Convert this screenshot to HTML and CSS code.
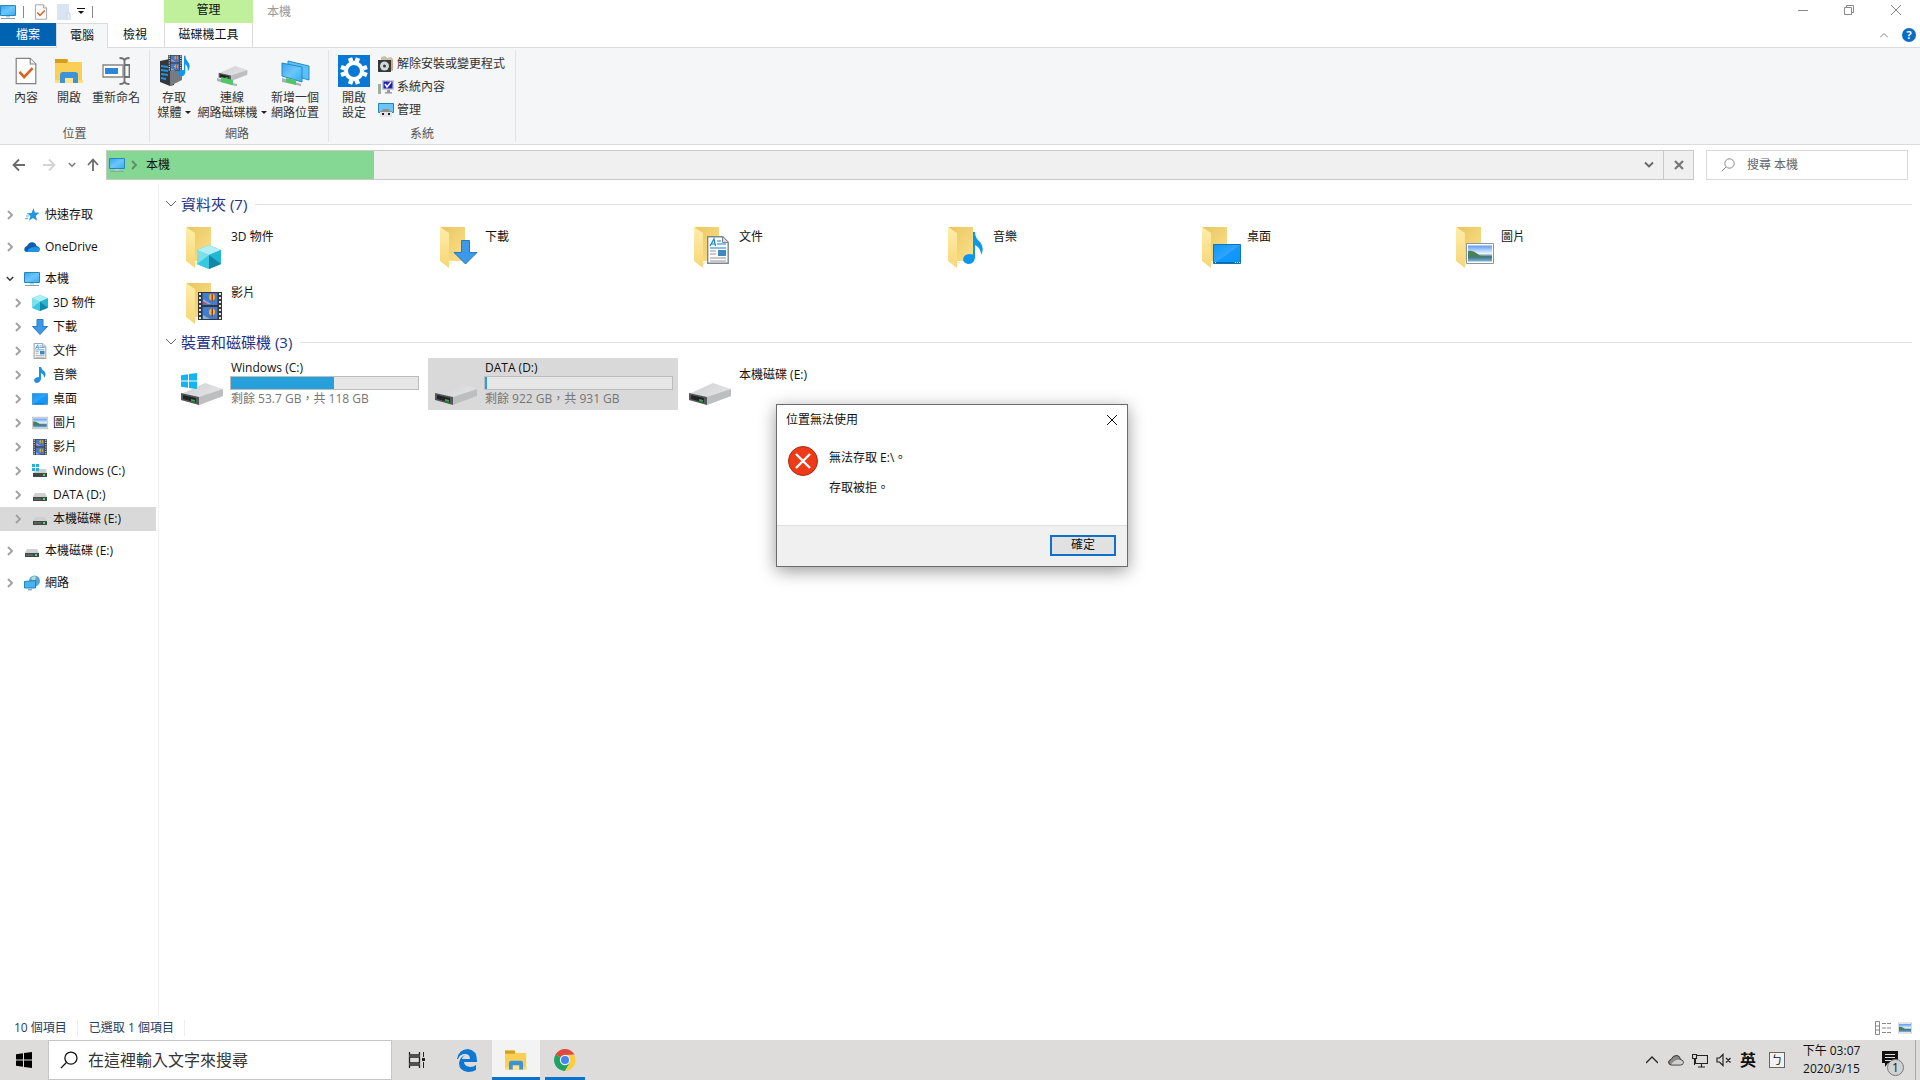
FILE: index.html
```html
<!DOCTYPE html>
<html lang="zh-Hant">
<head>
<meta charset="utf-8">
<title>本機</title>
<link rel="stylesheet" href="styles.css">
</head>
<body>
<svg class="sprite" aria-hidden="true">
  <defs>
    <linearGradient id="g-screen" x1="0" y1="0" x2="1" y2="1"><stop offset="0" stop-color="#3aa5ea"/><stop offset=".5" stop-color="#6cc6fb"/><stop offset="1" stop-color="#36aef3"/></linearGradient>
    <linearGradient id="g-desk" x1="0" y1="0" x2="1" y2="1"><stop offset="0" stop-color="#0d98f6"/><stop offset=".5" stop-color="#2ea5fa"/><stop offset=".52" stop-color="#1499fa"/><stop offset="1" stop-color="#0a93f5"/></linearGradient>
    <linearGradient id="g-fold" x1="0" y1="0" x2="1" y2="1"><stop offset="0" stop-color="#e9c65f"/><stop offset="1" stop-color="#fbe08c"/></linearGradient>
    <linearGradient id="g-flap" x1="0" y1="0" x2="0" y2="1"><stop offset="0" stop-color="#ffedaa"/><stop offset="1" stop-color="#f7d675"/></linearGradient>
    <linearGradient id="g-drive" x1="0" y1="0" x2="1" y2="1"><stop offset="0" stop-color="#cfcfd1"/><stop offset="1" stop-color="#ececee"/></linearGradient>
    <linearGradient id="g-photo" x1="0" y1="0" x2="0" y2="1"><stop offset="0" stop-color="#5b9bf2"/><stop offset=".5" stop-color="#eaf4fc"/><stop offset=".7" stop-color="#3a6f84"/><stop offset="1" stop-color="#7fb3d4"/></linearGradient>
    <symbol id="pc" viewBox="0 0 16 16"><path d="M.5 1.500h15v10H.5z" fill="url(#g-screen)" stroke="#2488bd"/><path d="M6 12h4v1.500H6z" fill="#b9cbd6"/><path d="M1 14.500h14" stroke="#8ba2b0"/></symbol>
    <symbol id="page" viewBox="0 0 24 30"><path d="M1.500 1.500h15l6 6v21h-21z" fill="#fdfdfd" stroke="#818181" stroke-width="1.300"/><path d="M16.500 1.500v6h6" fill="#eee" stroke="#818181" stroke-width="1.200"/><path d="M5 16l5 5.500L19 12" fill="none" stroke="#e0601c" stroke-width="2.800"/></symbol>
    <symbol id="explorer" viewBox="0 0 28 26"><path d="M0 1h12l2 3h13v21H0z" fill="#f9cf55"/><path d="M0 1h12l1 1-1 3H0z" fill="#d79e1d"/><path d="M0 22h28v3H0z" fill="#ffdf75"/><path d="M5 25V17q0-3 3-3h12q3 0 3 3v8h-5v-5h-8v5z" fill="#3b94da"/><path d="M10 20h8v5h-8z" fill="#ffe58b"/></symbol>
    <symbol id="rename" viewBox="0 0 28 28"><path d="M1 8h20v12H1z" fill="#fff" stroke="#858585" stroke-width="1.300"/><path d="M3 11h13v6H3z" fill="#2b86d5"/><path d="M17.500 1q5 0 5 3v20q0 3-5 3M27.500 1q-5 0-5 3v20q0 3 5 3M22.500 8h5v12h-5" fill="none" stroke="#717171" stroke-width="1.800"/></symbol>
    <symbol id="film" viewBox="0 0 24 28"><path d="M0 0h24v28H0z" fill="#353638"/><path d="M2 1v27M22 1v27" stroke="#e3e3e3" stroke-width="2" stroke-dasharray="2 2"/><path d="M4.500 1h15v12h-15zM4.500 15h15v12h-15z" fill="#437bd0"/><path d="M5 7l8 5H5zM5 23l7 4H5z" fill="#8ab3d8"/><ellipse cx="14" cy="5" rx="3" ry="3.500" fill="#e5b22b"/><path d="M13.500 1.500h1.500v8h-1.500z" fill="#b4401f"/><ellipse cx="14" cy="20" rx="3" ry="3.500" fill="#edbd32"/><path d="M13.500 16.500h1.500v8h-1.500z" fill="#963b25"/><path d="M5 9l5 3H5z" fill="#c44a7e"/></symbol>
    <symbol id="note" viewBox="0 0 18 34"><path d="M9 1h2q0 6 5 11 4 6-1 13 0-8-4-11v13q-1 6-7 6-4-1-4-5 1-5 6-5l3 .5z" fill="#0d97ec"/></symbol>
    <symbol id="drive" viewBox="0 0 44 24"><path d="M1 12L25 1l18 6v7L19 23 1 18z" fill="url(#g-drive)"/><path d="M19 15l24-8v7L19 23z" fill="#bdbec0"/><path d="M1 11l18 4v8L1 18z" fill="#55585a"/><path d="M3 13l13 3v4.500L3 17z" fill="#202425"/><path d="M11 17l4 1v2l-4-1z" fill="#2cae45"/></symbol>
    <symbol id="win" viewBox="0 0 16 16"><path d="M0 2.200l7-1v6.300H0zM8 1l8-1v7.500H8zM0 8.500h7v6.300l-7-1zM8 8.500h8V16l-8-1.100z" fill="currentColor"/></symbol>
    <symbol id="sdrive" viewBox="0 0 16 16"><path d="M3 6h10l2 4H1z" fill="#cfd0d1"/><path d="M1 10h14v4H1z" fill="#414846"/><path d="M2 11h7v2H2z" fill="#566460"/><path d="M11 11h2v2h-2z" fill="#43e464"/></symbol>
    <symbol id="sdrivew" viewBox="0 0 16 16"><path d="M5 6h9l1 4H1z" fill="#cfd0d1"/><path d="M1 10h14v4H1z" fill="#414846"/><path d="M11 11h2v2h-2z" fill="#43e464"/><path d="M0 1h3v3H0zM4 1h3v3H4zM0 5h3v3H0zM4 5h3v3H4z" fill="#20b0e2"/></symbol>
    <symbol id="cube" viewBox="0 0 24 24"><path d="M12 0l12 5v14l-12 5-12-5V5z" fill="#21bddb"/><path d="M0 5l12 5v14L0 19z" fill="#7ddfea"/><path d="M12 0l12 5-12 5L0 5z" fill="#b1eff4"/><path d="M12 10l12-5v14z" fill="#22b8d4"/><path d="M12 24V10l12 9z" fill="#1486a8"/><path d="M0 19l12-9v14z" fill="#37cade"/></symbol>
    <symbol id="doc" viewBox="0 0 22 28"><path d="M.7.700h15l5.500 5.500v21H.7z" fill="#fcfdfe" stroke="#7d8790" stroke-width="1.400"/><path d="M15.500 1v5.500H21" fill="#ddd" stroke="#7d8790"/><path d="M3 10l4-7 1.500 7M4 8h4M10 5h4M10 8h9M3 12h16" fill="none" stroke="#1582c4" stroke-width="1.200"/><path d="M11 14h8v6h-8z" fill="#4089bd"/><path d="M3 15h6M3 18h6M3 22h16M3 25h16" stroke="#9a8e99" stroke-width="1.200"/></symbol>
    <symbol id="desk" viewBox="0 0 28 20"><path d="M.5.500h27v19H.5z" fill="url(#g-desk)" stroke="#1174b8"/><path d="M1 18.500h26" stroke="#0868b2"/><path d="M2 18.500h1M22 18.500h1M24 18.500h1M26 18.500h1" stroke="#fff"/></symbol>
    <symbol id="photo" viewBox="0 0 28 21"><path d="M.5.500h27v20H.5z" fill="#fff" stroke="#8d969e"/><path d="M2 2.500h24v16H2z" fill="url(#g-photo)"/><path d="M2 8q5-1 9 2.500t8 2.500v1H2z" fill="#48805a"/></symbol>
    <symbol id="folder" viewBox="0 0 34 42"><path d="M1 0h24v34H8z" fill="url(#g-fold)"/><path d="M0 0l9 6v35L0 34z" fill="url(#g-flap)"/><path d="M9 35h5l-5 3z" fill="#ddd" opacity=".5"/></symbol>
    <symbol id="chev" viewBox="0 0 8 10"><path d="M2 1l4 4-4 4" fill="none" stroke="currentColor" stroke-width="1.800"/></symbol>
    <symbol id="chevd" viewBox="0 0 10 7"><path d="M1 1l4 4 4-4" fill="none" stroke="currentColor" stroke-width="1.800"/></symbol>
    <symbol id="thin" viewBox="0 0 12 8"><path d="M1 1l5 5 5-5" fill="none" stroke="currentColor"/></symbol>
    <symbol id="mag" viewBox="0 0 14 14"><circle cx="8.500" cy="5.500" r="4.700" fill="none" stroke="currentColor"/><path d="M5 9L.7 13.300" stroke="currentColor"/></symbol>
    <symbol id="x" viewBox="0 0 12 12"><path d="M1 1l10 10M11 1L1 11" fill="none" stroke="currentColor"/></symbol>
    <symbol id="cloud" viewBox="0 0 16 11"><path d="M3 10.500Q0 10 .3 7.500.5 5 3 4.500 5 0 9 .8 12 1.500 12.500 4.500 16 5 15.800 8q-.3 2.500-3 2.500z" fill="#0f5cb4"/><path d="M3 10.500Q5 5 12.500 5.500q3 .4 3.300 2.500-.3 2.500-3 2.500z" fill="#2294e4"/></symbol>
  </defs>
</svg>

<div class="desktop">
  <header>
    <div class="titlebar">
      <div class="quick">
        <svg class="i16"><use href="#pc"/></svg><span class="bar"></span>
        <svg class="i16"><use href="#page"/></svg>
        <svg class="i16" viewBox="0 0 16 16"><path d="M1 0h12v16H1z" fill="#d9e4f3"/><path d="M11 9h3v7h-3z" fill="#edf2f9" stroke="#c7d4e8"/></svg>
        <svg class="qmenu" viewBox="0 0 8 7"><path d="M0 .5h8" stroke="#111"/><path d="M1 3h6L4 6z" fill="#111"/></svg><span class="bar"></span>
      </div>
      <div class="context">管理</div>
      <h1>本機</h1>
      <div class="winbtns">
        <button aria-label="最小化"><svg class="i12" viewBox="0 0 12 12"><path d="M1 6.500h10" stroke="#888"/></svg></button>
        <button aria-label="還原"><svg class="i12" viewBox="0 0 12 12"><path d="M1.500 3.500h7v7h-7zM3.500 3.500v-2h7v7h-2" fill="none" stroke="#888"/></svg></button>
        <button aria-label="關閉"><svg class="i12"><use href="#x"/></svg></button>
      </div>
    </div>
    <nav class="tabs">
      <button class="file">檔案</button><button class="active">電腦</button><button class="view">檢視</button><button class="tool">磁碟機工具</button>
      <div class="help"><svg class="up" viewBox="0 0 8 5"><path d="M0 4.500l4-4 4 4" fill="none" stroke="#888"/></svg><button class="q" aria-label="說明">?</button></div>
    </nav>
    <div class="ribbon">
      <section class="place">
        <div class="tools">
          <button class="big w44"><svg><use href="#page"/></svg>內容</button>
          <button class="big w42"><svg><use href="#explorer"/></svg>開啟</button>
          <button class="big w52"><svg><use href="#rename"/></svg>重新命名</button>
        </div>
        <h2>位置</h2>
      </section>
      <section class="net">
        <div class="tools">
          <button class="big w48"><svg class="i32" viewBox="0 0 32 32"><path d="M2 6l14-3v27l-4 1-10-4z" fill="#34383d"/><path d="M12 9h12v16l-12 6z" fill="#777b80"/><path d="M3 11l7 1M3 15l7 1M3 19l7 1M3 23l5 1" stroke="#2393e9" stroke-width="2"/><use href="#film" x="10" y="0" width="14" height="16"/><use href="#note" x="19" y="0" width="14" height="22"/></svg>存取<br><span>媒體<i></i></span></button>
          <button class="big w68"><svg class="i32" viewBox="0 0 32 32"><use href="#drive" x="2" y="10" width="30" height="17"/><path d="M1 23l14 5 6 1v2l-6-1-14-4z" fill="#a9b2af"/><path d="M5 22l12 3v5L5 27z" fill="#51c866"/></svg>連線<br><span>網路磁碟機<i></i></span></button>
          <button class="big w58"><svg class="i32" viewBox="0 0 32 32"><path d="M9 6l21 5v14L9 19z" fill="#5ac0f5" stroke="#278dc9"/><path d="M3 8l20 4v15L3 21z" fill="url(#g-screen)" stroke="#2489c9"/><path d="M3 23l19 6v2L3 27z" fill="#a6b2ae"/><path d="M7 23l10 2v5L7 27z" fill="#50c765"/></svg>新增一個<br><span>網路位置</span></button>
        </div>
        <h2>網路</h2>
      </section>
      <section class="sys">
        <div class="tools">
          <button class="big w42"><svg class="i32" viewBox="0 0 32 32"><path d="M0 0h32v32H0z" fill="#0778d5"/><circle cx="16" cy="16" r="8" fill="none" stroke="#fff" stroke-width="4"/><g stroke="#fff" stroke-width="4.500"><path d="M13.500 7L12 3M18.500 7L20 3M13.500 25L12 29M18.500 25L20 29M7 13.500L3 12M7 18.500L3 20M25 13.500L29 12M25 18.500L29 20"/></g></svg>開啟<br><span>設定</span></button>
          <div class="list">
            <button><svg class="i16" viewBox="0 0 16 16"><path d="M3 1l4-1 2 2 4-1 2 2v12H3z" fill="#c5c3a9"/><path d="M11 4h4v10h-4z" fill="#d6a27e"/><path d="M0 4h13v12H0z" fill="#343a3a"/><circle cx="6.500" cy="10" r="4.500" fill="#d4d8d8"/><circle cx="6.500" cy="10" r="1.500" fill="#343a3a"/></svg>解除安裝或變更程式</button>
            <button><svg class="i16" viewBox="0 0 16 16"><path d="M0 5h3v10H0z" fill="#9fae9e"/><path d="M4 1h12v10H4z" fill="#c9ccd2"/><path d="M5.500 2.500h9v7h-9z" fill="#2222b8"/><path d="M7 5l2 3 4-5" stroke="#fff" stroke-width="1.500" fill="none"/><path d="M9 11h3v2h2v1.500H7V13h2z" fill="#999"/></svg>系統內容</button>
            <button><svg class="i16" viewBox="0 0 16 16"><path d="M.5 1.500h15v9H.5z" fill="#6bc6f5" stroke="#2984bc"/><path d="M5 7h6l1 2h2v6H2V9h2z" fill="#8f8f8f"/><path d="M2 10h12v5H2z" fill="#e4e4e4"/><path d="M4 11h2v2H4zM10 11h2v2h-2z" fill="#222"/></svg>管理</button>
          </div>
        </div>
        <h2>系統</h2>
      </section>
    </div>
    <div class="address">
      <div class="nav">
        <button aria-label="上一頁"><svg class="i14" viewBox="0 0 14 14"><path d="M13 7H2M7 1.500L1.500 7 7 12.500" fill="none" stroke="#6b6b6b" stroke-width="1.800"/></svg></button>
        <button aria-label="下一頁"><svg class="i14" viewBox="0 0 14 14"><path d="M1 7h11M7 1.500L12.500 7 7 12.500" fill="none" stroke="#d4d4d4" stroke-width="1.800"/></svg></button>
        <button class="hist" aria-label="最近的位置"><svg class="i8"><use href="#chevd"/></svg></button>
        <button class="upb" aria-label="上移"><svg class="i14" viewBox="0 0 14 14"><path d="M7 13V2M2 7l5-5.500L12 7" fill="none" stroke="#6b6b6b" stroke-width="1.800"/></svg></button>
      </div>
      <div class="path">
        <div class="done"><svg class="i16"><use href="#pc"/></svg><svg class="sep"><use href="#chev"/></svg><span>本機</span></div>
        <button class="drop" aria-label="先前的位置"><svg class="i10"><use href="#chevd"/></svg></button>
        <button class="stop" aria-label="停止"><svg class="i12" viewBox="0 0 12 12"><path d="M2 2l8 8M10 2l-8 8" stroke="#777" stroke-width="2.200"/></svg></button>
      </div>
      <label class="find"><svg class="i14"><use href="#mag"/></svg><input type="text" placeholder="搜尋 本機" aria-label="搜尋 本機"></label>
    </div>
  </header>

  <div class="body">
    <nav class="tree">
      <ul>
        <li class="top"><a href="#"><svg class="c"><use href="#chev"/></svg><svg class="i16" viewBox="0 0 16 16"><path d="M9.500 1l1.400 4.500 4.600.3-3.700 2.900 1.200 5-4-2.700-4 2.500L6.400 9 3 6.200l4.600-.3z" fill="#2494e0"/><path d="M2 9h3M1 11.500h3M3 6.500h2" stroke="#55aee6"/></svg>快速存取</a></li>
        <li class="top"><a href="#"><svg class="c"><use href="#chev"/></svg><svg class="i16"><use href="#cloud"/></svg>OneDrive</a></li>
        <li><a href="#"><svg class="c open"><use href="#chevd"/></svg><svg class="i16"><use href="#pc"/></svg>本機</a></li>
        <li class="sub"><a href="#"><svg class="c"><use href="#chev"/></svg><svg class="i16"><use href="#cube"/></svg>3D 物件</a></li>
        <li class="sub"><a href="#"><svg class="c"><use href="#chev"/></svg><svg class="i16" viewBox="0 0 16 16"><path d="M5 .5h6v7h4.500L8 15.500.5 7.500H5z" fill="#3c98e8" stroke="#2878be"/></svg>下載</a></li>
        <li class="sub"><a href="#"><svg class="c"><use href="#chev"/></svg><svg class="i16"><use href="#doc"/></svg>文件</a></li>
        <li class="sub"><a href="#"><svg class="c"><use href="#chev"/></svg><svg class="i16" viewBox="0 0 16 16"><path d="M7 0h2q1 3 3 4 3 3 0 7 0-4-3-5v6q-1 4-5 4-2-1-2-3 1-3 5-3z" fill="#1d91de"/></svg>音樂</a></li>
        <li class="sub"><a href="#"><svg class="c"><use href="#chev"/></svg><svg class="i16"><use href="#desk"/></svg>桌面</a></li>
        <li class="sub"><a href="#"><svg class="c"><use href="#chev"/></svg><svg class="i16"><use href="#photo"/></svg>圖片</a></li>
        <li class="sub"><a href="#"><svg class="c"><use href="#chev"/></svg><svg class="i16"><use href="#film"/></svg>影片</a></li>
        <li class="sub"><a href="#"><svg class="c"><use href="#chev"/></svg><svg class="i16"><use href="#sdrivew"/></svg>Windows (C:)</a></li>
        <li class="sub"><a href="#"><svg class="c"><use href="#chev"/></svg><svg class="i16"><use href="#sdrive"/></svg>DATA (D:)</a></li>
        <li class="sub top"><a href="#" class="sel"><svg class="c"><use href="#chev"/></svg><svg class="i16"><use href="#sdrive"/></svg>本機磁碟 (E:)</a></li>
        <li class="top"><a href="#"><svg class="c"><use href="#chev"/></svg><svg class="i16"><use href="#sdrive"/></svg>本機磁碟 (E:)</a></li>
        <li><a href="#"><svg class="c"><use href="#chev"/></svg><svg class="i16" viewBox="0 0 16 16"><circle cx="10.500" cy="6" r="5.500" fill="#5aa3cf"/><path d="M7 3q3-3 5-1l-1 3H8z" fill="#b8dcc9"/><path d="M.5 6.500l11-1v7.500L.5 13z" fill="#46b3f3" stroke="#2384bf"/><path d="M4 13.500h4v2H4z" fill="#8fb3c8"/></svg>網路</a></li>
      </ul>
    </nav>
    <main>
      <h2 class="group"><svg><use href="#thin"/></svg>資料夾 (7)</h2>
      <div class="tiles">
        <a href="#" class="tile"><svg class="i48" viewBox="0 0 48 48"><use href="#folder" x="8" y="5" width="34" height="42"/><use href="#cube" x="18" y="23" width="26" height="24"/></svg><span>3D 物件</span></a>
        <a href="#" class="tile"><svg class="i48" viewBox="0 0 48 48"><use href="#folder" x="8" y="5" width="34" height="42"/><path d="M29.500 18.500h8v12h7.500L33.500 42 22 30.500h7.500z" fill="#3c98e8" stroke="#2878be"/></svg><span>下載</span></a>
        <a href="#" class="tile"><svg class="i48" viewBox="0 0 48 48"><use href="#folder" x="8" y="5" width="34" height="42"/><use href="#doc" x="21" y="14" width="22" height="28"/></svg><span>文件</span></a>
        <a href="#" class="tile"><svg class="i48" viewBox="0 0 48 48"><use href="#folder" x="8" y="5" width="34" height="42"/><path d="M33 10h2q0 6 5 10 5 6 1 13 0-7-6-10v13q-1 6-7 6-5-1-5-5 1-5 7-5l3 .5z" fill="#0d97ec"/></svg><span>音樂</span></a>
        <a href="#" class="tile"><svg class="i48" viewBox="0 0 48 48"><use href="#folder" x="8" y="5" width="34" height="42"/><use href="#desk" x="19" y="22" width="28" height="20"/></svg><span>桌面</span></a>
        <a href="#" class="tile"><svg class="i48" viewBox="0 0 48 48"><use href="#folder" x="8" y="5" width="34" height="42"/><use href="#photo" x="18" y="21" width="28" height="21"/></svg><span>圖片</span></a>
        <a href="#" class="tile"><svg class="i48" viewBox="0 0 48 48"><use href="#folder" x="8" y="5" width="34" height="42"/><use href="#film" x="20" y="14" width="24" height="28"/></svg><span>影片</span></a>
      </div>
      <h2 class="group"><svg><use href="#thin"/></svg>裝置和磁碟機 (3)</h2>
      <div class="tiles">
        <a href="#" class="tile drive"><svg class="i48" viewBox="0 0 48 48"><use href="#drive" x="2" y="22" width="44" height="24"/><use href="#win" x="3" y="13" width="16" height="16" color="#13b4ef"/></svg><span class="info"><b>Windows (C:)</b><span class="meter"><span style="width:55%"></span></span><small>剩餘 53.7 GB，共 118 GB</small></span></a>
        <a href="#" class="tile drive sel"><svg class="i48" viewBox="0 0 48 48"><use href="#drive" x="2" y="22" width="44" height="24"/></svg><span class="info"><b>DATA (D:)</b><span class="meter"><span style="width:1%"></span></span><small>剩餘 922 GB，共 931 GB</small></span></a>
        <a href="#" class="tile"><svg class="i48" viewBox="0 0 48 48"><use href="#drive" x="2" y="22" width="44" height="24"/></svg><span>本機磁碟 (E:)</span></a>
      </div>
    </main>
  </div>

  <div class="status">
    <span>10 個項目</span><span>已選取 1 個項目</span>
    <div class="modes">
      <button aria-label="詳細資料"><svg class="i16" viewBox="0 0 16 14"><path d="M.5.500h4v13h-4zM.5 5h4M.5 9h4M7 2.500h4M12 2.500h4M7 7h4M12 7h4M7 11.500h4M12 11.500h4" fill="none" stroke="#888"/></svg></button>
      <button aria-label="大圖示"><svg class="i14"><use href="#photo"/></svg></button>
    </div>
  </div>

  <footer class="taskbar">
    <button class="start" aria-label="開始"><svg class="i16"><use href="#win"/></svg></button>
    <label class="tsearch"><svg class="i18"><use href="#mag"/></svg><input type="text" placeholder="在這裡輸入文字來搜尋" aria-label="在這裡輸入文字來搜尋"></label>
    <button class="task w50" aria-label="工作檢視"><svg class="i18" viewBox="0 0 18 18"><path d="M1.500 1v3h10V1M1.500 17v-3h10v3M1.500 6h10v6h-10z" fill="none" stroke="#222" stroke-width="1.300"/><path d="M15.500 1v5M15.500 11v6" stroke="#222"/><path d="M14 7h3v3h-3z" fill="#222"/></svg></button>
    <button class="task w50" aria-label="Edge"><svg class="i24" viewBox="0 0 24 24"><path d="M2 11Q4 1 13 1q9 1 9 12v1H9q0 4 6 5 4 0 6-2v5q-3 2-8 2-9-1-9-9 1-6 6-8-3 2-3 4h8q0-5-5-5-5 0-7 5z" fill="#0d77d3"/></svg></button>
    <button class="task on w48" aria-label="檔案總管"><svg class="i22"><use href="#explorer"/></svg></button>
    <button class="task run" aria-label="Chrome"><svg class="i22" viewBox="0 0 22 22"><path d="M11 11L1.500 5.500A11 11 0 0 1 20.500 5.500L11 6z" fill="#dd4b3e"/><path d="M11 11L1.500 5.500A11 11 0 0 0 11 22l5-8.500z" fill="#1ea362"/><path d="M11 6h9.500A11 11 0 0 1 11 22l5-8.500z" fill="#ffcd40"/><circle cx="11" cy="11" r="5.200" fill="#f3f3f3"/><circle cx="11" cy="11" r="4" fill="#4285f4"/></svg></button>
    <div class="tray">
      <button aria-label="顯示隱藏的圖示"><svg class="i12" viewBox="0 0 12 12"><path d="M0 9l6-6 6 6" fill="none" stroke="#222" stroke-width="1.300"/></svg></button>
      <button aria-label="OneDrive"><svg class="i16" viewBox="0 0 16 12"><path d="M3 11Q.5 10.500.6 8 .8 6 3 5.500 5 1 9 1.500 12 2 12.500 5.500q3 .5 2.800 3-.2 2.500-2.800 2.500z" fill="#8a8a8a" stroke="#333"/><path d="M3 10.500Q7 4.500 12.500 6q2.500.6 2.500 2.500 0 2-2.500 2z" fill="#d0d0d0"/></svg></button>
      <button aria-label="網路"><svg class="i16" viewBox="0 0 16 16"><path d="M5 3.500h10.500v8H3.500V7M9.500 12v3M6 15h7M.5 2.500h4v4h-4zM2.500 6v7" fill="none" stroke="#222" stroke-width="1.100"/></svg></button>
      <button aria-label="靜音"><svg class="i16" viewBox="0 0 16 16"><path d="M1 6h2.500L7 2.500v11L3.500 10H1zM10 6l4.500 4.500M14.500 6L10 10.500" fill="none" stroke="#222" stroke-width="1.200"/></svg></button>
      <button class="lang">英</button>
      <button class="ime"><span>ㄅ</span></button>
      <time><span>下午 03:07</span><span>2020/3/15</span></time>
      <button class="notice" aria-label="通知"><svg class="i24" viewBox="0 0 24 24"><path d="M2 3h16v12H8l-3 4v-4H2z" fill="#111"/><path d="M5 6.500h10M5 9.500h10M5 12.500h7" stroke="#ddd"/></svg><span class="count">1</span></button>
      <span class="peek"></span>
    </div>
  </footer>

  <div class="dialog" role="alertdialog" aria-labelledby="dt">
    <div class="dhead"><span id="dt">位置無法使用</span><button aria-label="關閉"><svg class="i12"><use href="#x"/></svg></button></div>
    <div class="dmsg"><svg class="i30" viewBox="0 0 30 30"><circle cx="15" cy="15" r="14.500" fill="#ee3a18" stroke="#a92c15"/><path d="M8 8l14 14M22 8L8 22" stroke="#fff" stroke-width="2.400"/></svg><div><p>無法存取 E:\。</p><p>存取被拒。</p></div></div>
    <div class="dfoot"><button>確定</button></div>
  </div>
</div>
</body>
</html>
```
FILE: styles.css
```css
* { box-sizing: border-box; }
body { margin: 0; font: 12px/16px "Open Sans", "Noto Sans CJK TC", sans-serif; color: #111; background: #fff; }
button, input { font: inherit; color: inherit; border: 0; padding: 0; margin: 0; background: none; }
button { display: flex; align-items: center; justify-content: center; white-space: nowrap; }
a { color: inherit; text-decoration: none; }
h1, h2, p, ul { margin: 0; padding: 0; font-size: 12px; font-weight: 400; list-style: none; }
svg { display: block; flex: none; }
.sprite { position: absolute; width: 0; height: 0; }
.i8 { width: 8px; height: 8px; }
.i10 { width: 10px; height: 8px; }
.i12 { width: 12px; height: 12px; }
.i14 { width: 14px; height: 14px; }
.i16 { width: 16px; height: 16px; }
.i18 { width: 18px; height: 18px; }
.i22 { width: 22px; height: 24px; }
.i24 { width: 24px; height: 24px; }
.i30 { width: 30px; height: 30px; }
.i48 { width: 48px; height: 48px; }

.desktop { position: relative; display: flex; flex-direction: column; min-height: 100vh; }

.titlebar { display: flex; height: 23px; }
.quick { display: flex; align-items: center; gap: 7px; width: 164px; }
.quick .bar { width: 1px; height: 12px; background: #888; }
.quick .bar + svg { margin-left: 2px; }
.qmenu { width: 8px; height: 7px; margin-left: -2px; }
.context { width: 89px; text-align: center; line-height: 20px; background: #c1f09c; }
.titlebar h1 { margin-left: 14px; line-height: 23px; color: #999; }
.winbtns { display: flex; margin-left: auto; color: #888; }
.winbtns button { width: 46px; height: 20px; }
.winbtns button:last-child { width: 48px; }

.tabs { display: flex; height: 24px; }
.tabs button { width: 52px; height: 24px; }
.tabs .file { width: 56px; height: 23px; color: #fff; background: #0063b1; }
.tabs .active { height: 25px; margin-bottom: -1px; border: 1px solid #dadbdc; border-bottom: 0; background: #f5f6f7; }
.tabs .view { width: 56px; padding-right: 2px; }
.tabs .tool { width: 89px; border: solid #dadbdc; border-width: 0 1px; }
.tabs .active, .tabs .file { z-index: 1; }
.help { display: flex; align-items: center; gap: 18px; margin-left: auto; padding-right: 4px; }
.help .up { width: 8px; height: 5px; }
.help .q { width: 14px; height: 14px; border-radius: 50%; color: #fff; font-weight: 700; font-size: 11px; background: #0a6cc4; }
.help .up { margin-right: -4px; }

.ribbon { display: flex; height: 98px; background: #f5f6f7; border: solid #dadbdc; border-width: 1px 0; }
.ribbon section { display: flex; flex-direction: column; margin: 2px 0; padding-left: 4px; border-right: 1px solid #e2e3e4; }
.ribbon .place { width: 150px; }
.ribbon .net { width: 179px; padding: 0; }
.ribbon .sys { width: 187px; }
.ribbon h2 { margin: auto 4px 0 0; text-align: center; color: #555; }
.tools { display: flex; align-items: flex-start; }
.big { flex-direction: column; justify-content: flex-start; padding-top: 5px; line-height: 15px; color: #333; }
.big svg { width: 28px; height: 28px; margin: 2px 0 5px; }
.big .i32 { width: 32px; height: 32px; margin: 0 0 3px; }
.big br { display: none; }
.big i { display: inline-block; margin: 0 0 3px 3px; border: 3px solid transparent; border-top-color: #222; border-bottom: 0; }
.w42 { width: 42px; }
.w44 { width: 44px; }
.w48 { width: 48px; }
.w50 { width: 50px; }
.w52 { width: 52px; }
.w58 { width: 58px; }
.w68 { width: 68px; }
.list { display: flex; flex-direction: column; padding: 2px 0 0 3px; }
.list button { height: 23px; justify-content: flex-start; gap: 3px; color: #333; }

.address { display: flex; align-items: center; height: 40px; padding-right: 12px; }
.nav { display: flex; width: 106px; padding-left: 4px; }
.nav button { width: 30px; height: 30px; }
.nav .hist { width: 16px; color: #777; }
.nav .upb { width: 26px; }
.path { flex: 1; display: flex; height: 30px; border: 1px solid #c9c9c9; background: #f0f0f0; }
.done { display: flex; align-items: center; width: 267px; padding-left: 2px; background: #84d894; }
.done .sep { width: 8px; height: 10px; margin: 0 8px 0 5px; color: #5c8e66; }
.drop { width: 28px; margin-left: auto; color: #666; }
.stop { width: 30px; border-left: 1px solid #c9c9c9; }
.find { display: flex; align-items: center; gap: 12px; width: 202px; height: 30px; margin-left: 12px; padding-left: 14px; border: 1px solid #d9d9d9; color: #888; }
.find input { flex: 1; min-width: 0; }
input::placeholder { color: #666; opacity: 1; }

.body { flex: 1; display: flex; }
.tree { width: 159px; padding: 18px 2px 0 0; border-right: 1px solid #f0f0f0; }
.tree a { display: flex; align-items: center; height: 24px; padding-left: 6px; gap: 5px; white-space: nowrap; }
.tree .c { width: 8px; height: 10px; margin-right: 5px; color: #a0a0a0; }
.tree .open { color: #333; }
.tree .top { margin-bottom: 8px; }
.tree .sub a { padding-left: 14px; }
.sel { background: #d9d9d9; }

main { flex: 1; min-width: 0; padding: 5px 8px 0 7px; }
.group { display: flex; align-items: center; height: 30px; padding-bottom: 2px; font-size: 15px; color: #1e3287; }
.group svg { width: 12px; height: 8px; margin: 0 4px 0 -1px; color: #666; }
.group::after { content: ""; flex: 1; height: 1px; margin-left: 8px; background: #e2e2e2; }
.tiles { display: grid; grid-template-columns: repeat(auto-fill, 250px); gap: 4px; padding-left: 8px; }
.tile { display: flex; align-items: flex-start; gap: 5px; height: 52px; padding: 2px 5px 0 4px; }
.tile > span { padding-top: 7px; }
.drive > .info { flex: 1; display: flex; flex-direction: column; padding: 0; }
.info b { font-weight: 400; }
.meter { display: flex; height: 14px; margin: 0 0 1px -1px; border: 1px solid #bcbcbc; background: #e6e6e6; }
.meter span { background: #26a0da; }
.info small { font-size: 12px; color: #767676; }

.status { display: flex; align-items: center; height: 25px; padding: 1px 8px 0 14px; color: #26405e; }
.status > span { padding-right: 10px; margin-right: 11px; border-right: 1px solid #eee; }
.modes { display: flex; gap: 7px; margin-left: auto; }

.taskbar { display: flex; height: 40px; background: #dddcdb; }
.start { width: 48px; padding-right: 1px; color: #000; }
.tsearch { display: flex; align-items: center; gap: 10px; width: 344px; padding-left: 11px; border: 1px solid #c6c6c6; background: #fff; font-size: 16px; }
.tsearch input { flex: 1; min-width: 0; height: 30px; }
.tsearch input::placeholder { color: #333; }
.task { height: 40px; }
.task.on { background: #f3f3f3; border-bottom: 3px solid #0d72cc; }
.task.run { width: 40px; margin-left: 5px; border-bottom: 3px solid #0d72cc; }
.task.on, .task.run { padding-top: 3px; }
.tray { display: flex; align-items: center; margin-left: auto; }
.tray button { width: 24px; height: 40px; }
.tray .lang { font-size: 16px; font-weight: 700; }
.tray .ime { width: 34px; }
.ime span { width: 16px; height: 16px; border: 1px solid #666; background: #f2f2f2; font-size: 11px; line-height: 14px; }
time { display: flex; flex-direction: column; width: 75px; text-align: center; line-height: 18px; }
.tray .notice { position: relative; width: 46px; }
.count { position: absolute; right: 11px; bottom: 4px; width: 17px; height: 17px; border: 1px solid #777; border-radius: 50%; background: #d2d2d2; line-height: 15px; }
.peek { width: 5px; height: 40px; border-left: 1px solid #aaa; }

.dialog { position: absolute; left: 776px; top: 404px; width: 352px; border: 1px solid #6b6b6b; background: #fff; box-shadow: 0 4px 16px rgba(0, 0, 0, .4); }
.dhead { display: flex; justify-content: space-between; align-items: center; height: 29px; padding: 0 9px; }
.dmsg { display: flex; gap: 11px; height: 91px; padding: 12px 11px 0; }
.dmsg div { padding-top: 4px; }
.dmsg p { line-height: 16px; margin-bottom: 14px; }
.dfoot { display: flex; justify-content: flex-end; align-items: center; height: 41px; padding: 0 11px 2px 0; border-top: 1px solid #dfdfdf; background: #f0f0f0; }
.dfoot button { width: 66px; height: 21px; border: 2px solid #0d72cc; background: #e1e1e1; }
```
